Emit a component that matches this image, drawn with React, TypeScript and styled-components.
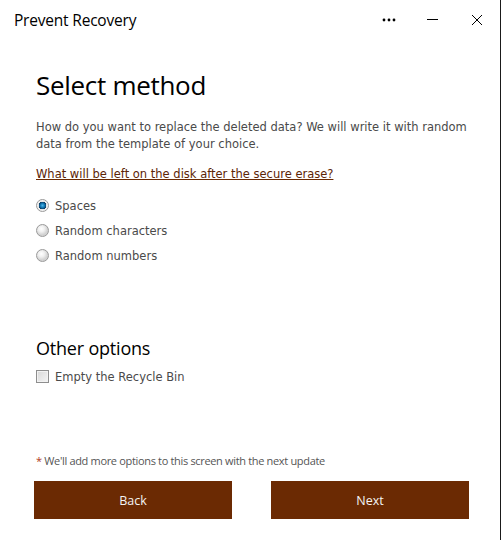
import React, { useState } from "react";
import styled, { createGlobalStyle } from "styled-components";

const Global = createGlobalStyle`
  html, body { margin: 0; padding: 0; background: #fff; }
  * { box-sizing: border-box; }
`;

const Window = styled.div`
  width: 501px;
  height: 540px;
  background: #fff;
  border-right: 1px solid #1a1a1a;
  display: flex;
  flex-direction: column;
  font-family: "DejaVu Sans", Verdana, sans-serif;
  overflow: hidden;
`;

const TitleBar = styled.div`
  height: 40px;
  display: flex;
  align-items: center;
  padding-left: 14px;
  padding-bottom: 1px;
`;

const Title = styled.div`
  flex: 1;
  font-family: "Open Sans", "Noto Sans", sans-serif;
  font-size: 15.5px;
  color: #000;
  letter-spacing: -0.2px;
`;

const WinButton = styled.div<{ $last?: boolean }>`
  width: 44px;
  height: 32px;
  display: flex;
  align-items: center;
  justify-content: center;
  color: #000;
  margin-right: ${(p) => (p.$last ? "1px" : "0")};
`;

const Content = styled.div`
  flex: 1;
  display: flex;
  flex-direction: column;
  padding: 0 20px 0 36px;
`;

const Heading = styled.h1`
  margin: 27px 0 0 0;
  font-family: "Open Sans", "Noto Sans", sans-serif;
  font-weight: 400;
  font-size: 26px;
  line-height: 36px;
  color: #000;
  letter-spacing: -0.3px;
`;

const Para = styled.p`
  margin: 16px 0 0 0;
  font-size: 11.5px;
  line-height: 17px;
  color: #4a4a4a;
`;

const Link = styled.a`
  display: inline-block;
  margin-top: 13px;
  font-size: 11.5px;
  line-height: 17px;
  color: #5c2406;
  text-decoration: underline;
  text-decoration-color: #6b2a03;
`;

const Options = styled.div`
  margin-top: 14px;
  display: flex;
  flex-direction: column;
  gap: 8px;
`;

const OptionRow = styled.label`
  display: flex;
  align-items: center;
  gap: 6px;
  height: 17px;
  font-size: 11.5px;
  color: #4a4a4a;
  cursor: default;
`;

const Radio = styled.span<{ $checked: boolean }>`
  width: 13px;
  height: 13px;
  border-radius: 50%;
  border: 1px solid #9a9a9a;
  background: ${(p) =>
    p.$checked
      ? "radial-gradient(circle at 50% 50%, #4fb4e6 0px, #137cb8 2px, #0b3d66 3.6px, #e6e6e6 4px, #fafafa 6px)"
      : "radial-gradient(circle at 40% 35%, #ffffff 0px, #f0f0f0 3px, #d2d2d2 6px)"};
  flex-shrink: 0;
`;

const SubHeading = styled.h2`
  margin: 72px 0 0 0;
  font-family: "Open Sans", "Noto Sans", sans-serif;
  font-weight: 400;
  font-size: 18px;
  line-height: 24px;
  color: #000;
  letter-spacing: -0.2px;
`;

const CheckRow = styled(OptionRow)`
  margin-top: 8px;
`;

const Check = styled.span`
  width: 13px;
  height: 13px;
  border: 1px solid #8e8e8e;
  background: linear-gradient(135deg, #d8d8d8 0%, #f4f4f4 100%);
  box-shadow: inset 0 0 0 1px #f2f2f2;
  flex-shrink: 0;
`;

const Spacer = styled.div`
  flex: 1;
`;

const Note = styled.div`
  font-family: "Open Sans", "Noto Sans", sans-serif;
  font-size: 11px;
  color: #555;
  letter-spacing: -0.33px;
  line-height: 14px;
`;

const Star = styled.span`
  color: #b03a1a;
`;

const ButtonRow = styled.div`
  margin-top: 13px;
  margin-bottom: 21px;
  display: grid;
  grid-template-columns: 198px 198px;
  column-gap: 39px;
  margin-left: -2px;
`;

const Btn = styled.button`
  height: 38px;
  border: none;
  background: #6b2a03;
  color: #f4f4f4;
  font-family: "Open Sans", "Noto Sans", sans-serif;
  font-size: 12.5px;
  cursor: pointer;
`;

export default function App() {
  const [method, setMethod] = useState("spaces");
  const opts = [
    { id: "spaces", label: "Spaces" },
    { id: "chars", label: "Random characters" },
    { id: "nums", label: "Random numbers" },
  ];
  return (
    <>
      <Global />
      <Window>
        <TitleBar>
          <Title>Prevent Recovery</Title>
          <WinButton>
            <svg width="14" height="4" viewBox="0 0 14 4">
              <circle cx="2" cy="2" r="1.4" fill="#000" />
              <circle cx="7" cy="2" r="1.4" fill="#000" />
              <circle cx="12" cy="2" r="1.4" fill="#000" />
            </svg>
          </WinButton>
          <WinButton>
            <svg width="12" height="2" viewBox="0 0 12 2">
              <rect x="0" y="0" width="11" height="1" fill="#000" />
            </svg>
          </WinButton>
          <WinButton $last>
            <svg width="12" height="12" viewBox="0 0 12 12">
              <path d="M1 1 L11 11 M11 1 L1 11" stroke="#000" strokeWidth="1" />
            </svg>
          </WinButton>
        </TitleBar>
        <Content>
          <Heading>Select method</Heading>
          <Para>
            How do you want to replace the deleted data? We will write it with random
            data from the template of your choice.
          </Para>
          <div>
            <Link href="#">What will be left on the disk after the secure erase?</Link>
          </div>
          <Options>
            {opts.map((o) => (
              <OptionRow key={o.id} onClick={() => setMethod(o.id)}>
                <Radio $checked={method === o.id} />
                {o.label}
              </OptionRow>
            ))}
          </Options>
          <SubHeading>Other options</SubHeading>
          <CheckRow>
            <Check />
            Empty the Recycle Bin
          </CheckRow>
          <Spacer />
          <Note>
            <Star>*</Star> We'll add more options to this screen with the next update
          </Note>
          <ButtonRow>
            <Btn>Back</Btn>
            <Btn>Next</Btn>
          </ButtonRow>
        </Content>
      </Window>
    </>
  );
}
